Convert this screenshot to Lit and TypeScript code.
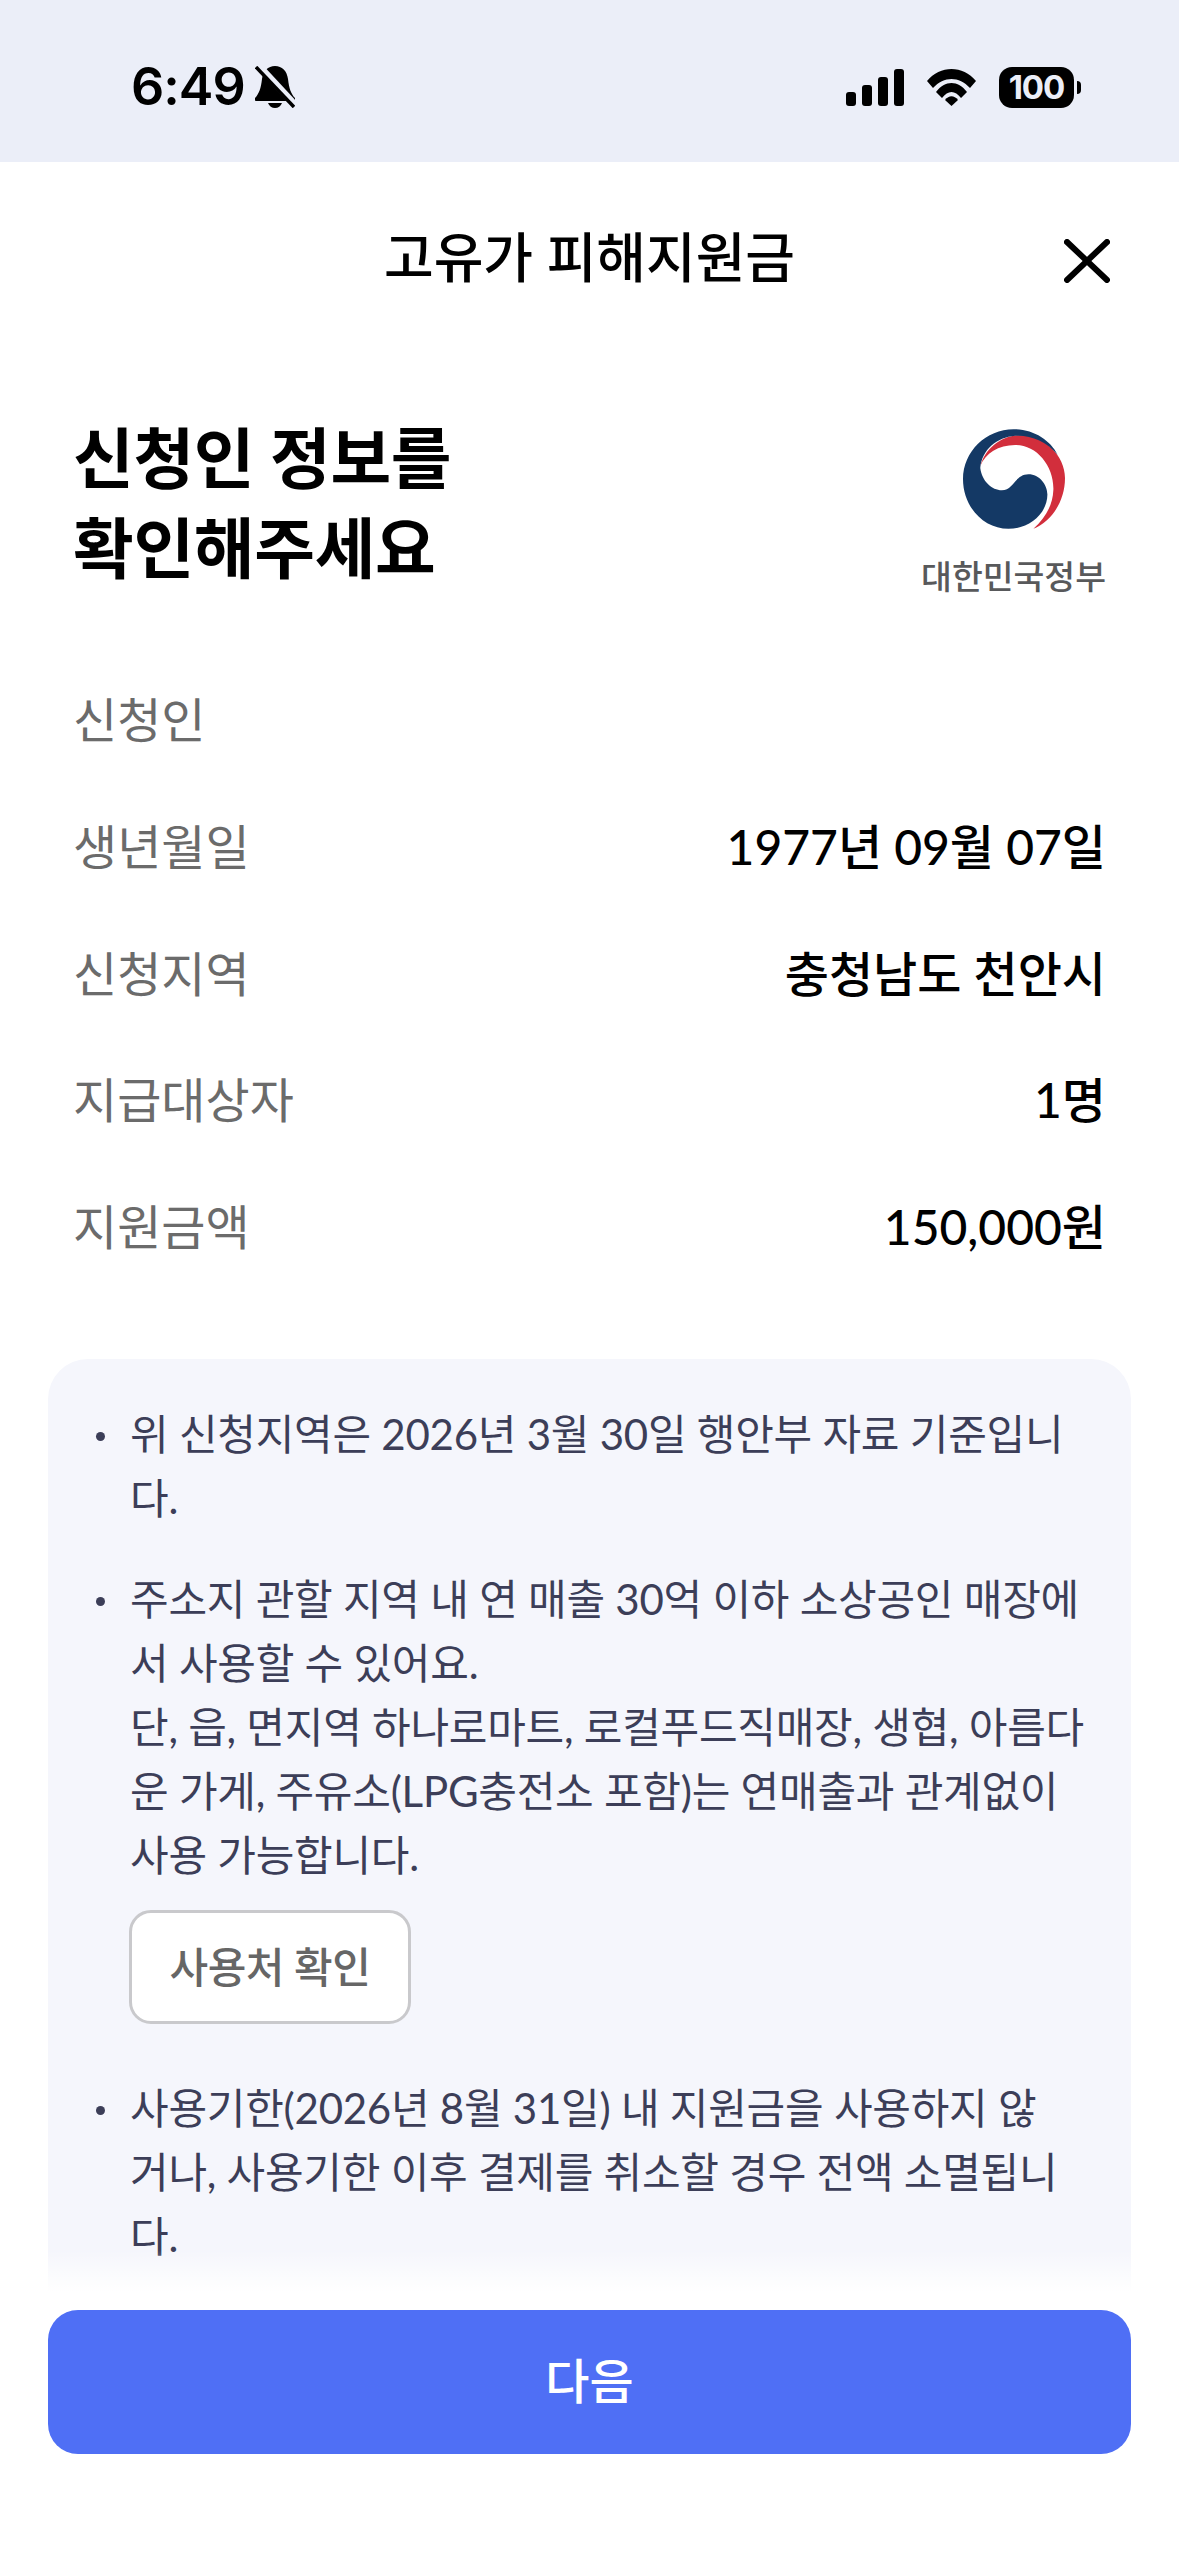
import { LitElement, html, css } from "lit";
import { customElement } from "lit/decorators.js";

@customElement("app-root")
export class AppRoot extends LitElement {
  static styles = css`
    :host {
      display: block;
      width: 1179px;
      height: 2556px;
      background: #fff;
      font-family: Lato, "Noto Sans CJK KR", sans-serif;
      color: #000;
      overflow: hidden;
    }
    .page { display: flex; flex-direction: column; height: 2556px; }
    .status {
      height: 162px;
      flex: none;
      background: #ebeef8;
      display: flex;
      align-items: flex-start;
      justify-content: space-between;
      padding: 58px 98px 0 131px;
      box-sizing: border-box;
      font-family: Inter, sans-serif;
    }
    .st-left, .st-right { display: flex; align-items: center; }
    .time { font-size: 52px; font-weight: 600; line-height: 58px; letter-spacing: -1px; }
    .bell { margin-left: 10px; }
    .st-right { gap: 23px; height: 58px; }
    .batt { display: flex; align-items: center; gap: 3px; }
    .batt-body {
      width: 75px; height: 41px; border-radius: 13px; background: #000; color: #ebeef8;
      font-size: 33px; font-weight: 700; line-height: 41px; text-align: center; letter-spacing: -1px;
    }
    .batt-tip { width: 4px; height: 13px; background: #000; border-radius: 0 6px 6px 0; }
    .nav {
      flex: none; height: 194px; position: relative;
      display: flex; justify-content: center; align-items: flex-start;
      padding-top: 64px; box-sizing: border-box;
      font-size: 54px; font-weight: 500; line-height: 64px;
    }
    .close { position: absolute; right: 69px; top: 77px; }
    .head { flex: none; display: flex; justify-content: space-between; padding: 57px 73px 0; height: 298px; box-sizing: border-box; }
    h1 { margin: 0; font-size: 66px; font-weight: 700; line-height: 90px; letter-spacing: -0.3px; }
    .logo { display: flex; flex-direction: column; align-items: center; margin-top: 16px; }
    .logo svg { display: block; }
    .logo span { font-size: 33.5px; font-weight: 500; color: #58595b; line-height: 40px; margin-top: 27px; white-space: nowrap; }
    .rows { flex: none; padding: 0 73px; }
    .row { display: flex; justify-content: space-between; align-items: center; height: 126.7px; font-size: 48px; }
    .row .k { color: #6b6b6b; }
    .row .v { font-weight: 500; }
    .card-wrap { flex: 1; min-height: 0; position: relative; padding: 0 48px; margin-top: 72px; }
    .card {
      height: 100%; background: #f5f6fc; border-radius: 40px 40px 0 0; overflow: hidden;
      padding: 43px 0 0 82px; box-sizing: border-box; position: relative;
      font-size: 42px; line-height: 64px; color: #3c3e58; letter-spacing: -0.25px;
    }
    .note { position: relative; margin: 0 0 37px; white-space: nowrap; }
    .note::before { content: ""; position: absolute; left: -34px; top: 30px; width: 9px; height: 9px; border-radius: 50%; background: #3c3e58; }
    .pick {
      display: flex; align-items: center; justify-content: center;
      width: 282px; height: 114px; box-sizing: border-box; margin: 23px 0 52px -1px;
      background: #fff; border: 3px solid #c9c9cc; border-radius: 22px;
      font-size: 42px; font-weight: 500; color: #666; letter-spacing: -0.5px;
    }
    .fade { position: absolute; left: 0; right: 0; bottom: 0; height: 60px; background: linear-gradient(to bottom, rgba(255,255,255,0), #fff 70%); }
    .foot { flex: none; padding: 0 48px 102px; }
    .next {
      height: 144px; border-radius: 30px; background: #4f6ff5; color: #fff;
      display: flex; align-items: center; justify-content: center; padding-bottom: 8px; box-sizing: border-box;
      font-size: 48px; font-weight: 500;
    }
  `;

  render() {
    return html`<div class="page">
      <div class="status">
        <div class="st-left">
          <span class="time">6:49</span>
          <svg class="bell" width="40" height="42" viewBox="0 0 40 42">
            <path d="M20 0c7 0 12 5 13 13 1 9 3 15 7 19 1 2 0 3-2 3H2c-2 0-3-1-2-3 4-4 6-10 7-19C8 5 13 0 20 0z" fill="#000"/>
            <path d="M13 37h14c-1 3-4 5-7 5s-6-2-7-5z" fill="#000"/>
            <path d="M3 -1l38 41" stroke="#ebeef8" stroke-width="7"/>
            <path d="M1 1l38 40" stroke="#000" stroke-width="3.5"/>
          </svg>
        </div>
        <div class="st-right">
          <svg width="58" height="37" viewBox="0 0 58 37">
            <rect x="0" y="23" width="10" height="14" rx="3" fill="#000"/>
            <rect x="16" y="16" width="10" height="21" rx="3" fill="#000"/>
            <rect x="32" y="8" width="10" height="29" rx="3" fill="#000"/>
            <rect x="48" y="0" width="10" height="37" rx="3" fill="#000"/>
          </svg>
          <svg width="49" height="37" viewBox="0 0 49 37">
            <path d="M0 12C13-4 36-4 49 12L43 19C32 7 17 7 6 19Z" fill="#000"/>
            <path d="M9 23C18 11 31 11 40 23L34 29C28 21 21 21 15 29Z" fill="#000"/>
            <path d="M18 31C22 26 27 26 31 31L24.5 37Z" fill="#000"/>
          </svg>
          <div class="batt"><div class="batt-body">100</div><div class="batt-tip"></div></div>
        </div>
      </div>

      <div class="nav">고유가 피해지원금
        <svg class="close" width="46" height="44" viewBox="0 0 46 44">
          <path d="M3 3l40 38M43 3L3 41" stroke="#000" stroke-width="6" stroke-linecap="round"/>
        </svg>
      </div>

      <div class="head">
        <h1>신청인 정보를<br />확인해주세요</h1>
        <div class="logo">
          <svg width="102" height="100" viewBox="248 88 307 300">
            <path fill="#d22e3c" d="M300 200C312 150 360 108 415 106C490 104 555 165 555 235C555 305 515 365 460 388C500 350 518 315 520 270C522 200 470 135 405 136C355 137 315 160 300 200Z"/>
            <path fill="#143965" d="M400 88C460 88 510 120 533 165C500 125 450 105 405 108C350 112 305 150 300 205C305 245 335 272 365 272C400 272 405 224 445 224C478 224 502 255 502 285C502 340 450 388 385 388C310 388 248 322 248 238C248 155 318 88 400 88Z"/>
          </svg>
          <span>대한민국정부</span>
        </div>
      </div>

      <div class="rows">
        <div class="row"><span class="k">신청인</span><span class="v"></span></div>
        <div class="row"><span class="k">생년월일</span><span class="v">1977년 09월 07일</span></div>
        <div class="row"><span class="k">신청지역</span><span class="v">충청남도 천안시</span></div>
        <div class="row"><span class="k">지급대상자</span><span class="v">1명</span></div>
        <div class="row"><span class="k">지원금액</span><span class="v">150,000원</span></div>
      </div>

      <div class="card-wrap">
        <div class="card">
          <p class="note">위 신청지역은 2026년 3월 30일 행안부 자료 기준입니<br />다.</p>
          <div class="note">주소지 관할 지역 내 연 매출 30억 이하 소상공인 매장에<br />서 사용할 수 있어요.<br />단, 읍, 면지역 하나로마트, 로컬푸드직매장, 생협, 아름다<br />운 가게, 주유소(LPG충전소 포함)는 연매출과 관계없이<br />사용 가능합니다.
            <div class="pick">사용처 확인</div>
          </div>
          <p class="note">사용기한(2026년 8월 31일) 내 지원금을 사용하지 않<br />거나, 사용기한 이후 결제를 취소할 경우 전액 소멸됩니<br />다.</p>
        </div>
        <div class="fade"></div>
      </div>

      <div class="foot"><div class="next">다음</div></div>
    </div>`;
  }
}
